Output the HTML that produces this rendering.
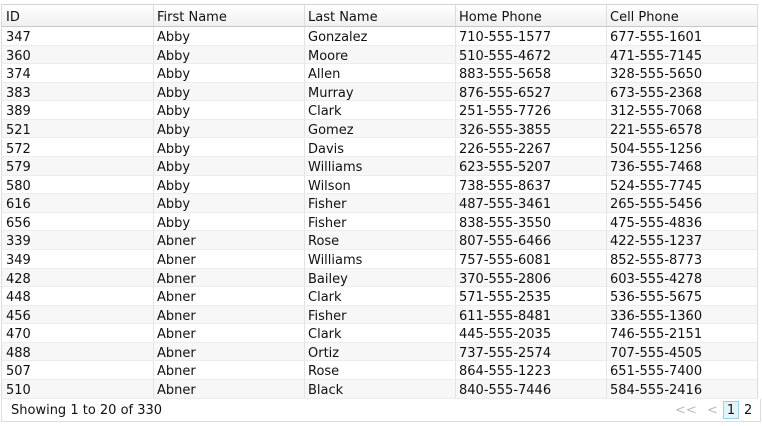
<!DOCTYPE html>
<html><head><style>
body{margin:0;width:762px;height:426px;background:#fff;font-family:"DejaVu Sans",sans-serif;font-size:13px;color:#111;position:relative;overflow:hidden}
.g{position:absolute;left:1px;width:757px;border-left:1px solid #ddd;border-right:1px solid #ddd;box-sizing:border-box}
.hd{top:4px;height:23px;border-top:1px solid #d4d4d4;border-bottom:1px solid #c8c8c8;background:linear-gradient(#fff,#f0f0f0)}
.r{position:absolute;left:1px;width:757px;height:18.6px;border-bottom:1px solid #ececec;box-sizing:border-box;border-left:1px solid #ddd;border-right:1px solid #ddd}
.r:nth-child(even){background:#f7f7f7}
.c{position:absolute;top:0;height:100%;line-height:18px;padding-top:2px;padding-left:3px;box-sizing:border-box;border-left:1px solid #e4e4e4;white-space:nowrap}
.c1{left:0;width:152px;border-left:none;padding-left:4px}
.c2{left:151px;width:151px}.c3{left:302px;width:151px}.c4{left:453px;width:151px}.c5{left:604px;width:151px}
.hd .c{line-height:22px;border-left-color:#ddd}
.ft{position:absolute;left:1px;top:399px;width:760px;height:23px;border:1px solid #ddd;border-top:none;box-sizing:border-box;background:#fff}
.ft div{line-height:16px}
</style></head><body>
<div class="g hd" style="position:absolute"><div class="c c1">ID</div><div class="c c2">First Name</div><div class="c c3">Last Name</div><div class="c c4">Home Phone</div><div class="c c5">Cell Phone</div></div>
<div id="rows">
<div class="r" style="top:27px"><div class="c c1">347</div><div class="c c2">Abby</div><div class="c c3">Gonzalez</div><div class="c c4">710-555-1577</div><div class="c c5">677-555-1601</div></div>
<div class="r" style="top:45.6px"><div class="c c1">360</div><div class="c c2">Abby</div><div class="c c3">Moore</div><div class="c c4">510-555-4672</div><div class="c c5">471-555-7145</div></div>
<div class="r" style="top:64.2px"><div class="c c1">374</div><div class="c c2">Abby</div><div class="c c3">Allen</div><div class="c c4">883-555-5658</div><div class="c c5">328-555-5650</div></div>
<div class="r" style="top:82.7px"><div class="c c1">383</div><div class="c c2">Abby</div><div class="c c3">Murray</div><div class="c c4">876-555-6527</div><div class="c c5">673-555-2368</div></div>
<div class="r" style="top:101.3px"><div class="c c1">389</div><div class="c c2">Abby</div><div class="c c3">Clark</div><div class="c c4">251-555-7726</div><div class="c c5">312-555-7068</div></div>
<div class="r" style="top:119.9px"><div class="c c1">521</div><div class="c c2">Abby</div><div class="c c3">Gomez</div><div class="c c4">326-555-3855</div><div class="c c5">221-555-6578</div></div>
<div class="r" style="top:138.5px"><div class="c c1">572</div><div class="c c2">Abby</div><div class="c c3">Davis</div><div class="c c4">226-555-2267</div><div class="c c5">504-555-1256</div></div>
<div class="r" style="top:157.1px"><div class="c c1">579</div><div class="c c2">Abby</div><div class="c c3">Williams</div><div class="c c4">623-555-5207</div><div class="c c5">736-555-7468</div></div>
<div class="r" style="top:175.6px"><div class="c c1">580</div><div class="c c2">Abby</div><div class="c c3">Wilson</div><div class="c c4">738-555-8637</div><div class="c c5">524-555-7745</div></div>
<div class="r" style="top:194.2px"><div class="c c1">616</div><div class="c c2">Abby</div><div class="c c3">Fisher</div><div class="c c4">487-555-3461</div><div class="c c5">265-555-5456</div></div>
<div class="r" style="top:212.8px"><div class="c c1">656</div><div class="c c2">Abby</div><div class="c c3">Fisher</div><div class="c c4">838-555-3550</div><div class="c c5">475-555-4836</div></div>
<div class="r" style="top:231.4px"><div class="c c1">339</div><div class="c c2">Abner</div><div class="c c3">Rose</div><div class="c c4">807-555-6466</div><div class="c c5">422-555-1237</div></div>
<div class="r" style="top:250px"><div class="c c1">349</div><div class="c c2">Abner</div><div class="c c3">Williams</div><div class="c c4">757-555-6081</div><div class="c c5">852-555-8773</div></div>
<div class="r" style="top:268.5px"><div class="c c1">428</div><div class="c c2">Abner</div><div class="c c3">Bailey</div><div class="c c4">370-555-2806</div><div class="c c5">603-555-4278</div></div>
<div class="r" style="top:287.1px"><div class="c c1">448</div><div class="c c2">Abner</div><div class="c c3">Clark</div><div class="c c4">571-555-2535</div><div class="c c5">536-555-5675</div></div>
<div class="r" style="top:305.7px"><div class="c c1">456</div><div class="c c2">Abner</div><div class="c c3">Fisher</div><div class="c c4">611-555-8481</div><div class="c c5">336-555-1360</div></div>
<div class="r" style="top:324.3px"><div class="c c1">470</div><div class="c c2">Abner</div><div class="c c3">Clark</div><div class="c c4">445-555-2035</div><div class="c c5">746-555-2151</div></div>
<div class="r" style="top:342.9px"><div class="c c1">488</div><div class="c c2">Abner</div><div class="c c3">Ortiz</div><div class="c c4">737-555-2574</div><div class="c c5">707-555-4505</div></div>
<div class="r" style="top:361.4px"><div class="c c1">507</div><div class="c c2">Abner</div><div class="c c3">Rose</div><div class="c c4">864-555-1223</div><div class="c c5">651-555-7400</div></div>
<div class="r" style="top:380px"><div class="c c1">510</div><div class="c c2">Abner</div><div class="c c3">Black</div><div class="c c4">840-555-7446</div><div class="c c5">584-555-2416</div></div>
</div>
<div class="ft">
<div style="position:absolute;left:9px;top:4px">Showing 1 to 20 of 330</div>
<div style="position:absolute;left:673px;top:4px;color:#bbb">&lt;&lt;</div>
<div style="position:absolute;left:705px;top:4px;color:#bbb">&lt;</div>
<div style="position:absolute;left:721px;top:2px;width:16px;height:18px;padding-top:1px;text-align:center;background:#e4f4fc;border:1px solid #9ed0ea;box-sizing:border-box">1</div>
<div style="position:absolute;left:742px;top:4px">2</div>
</div>
</body></html>
